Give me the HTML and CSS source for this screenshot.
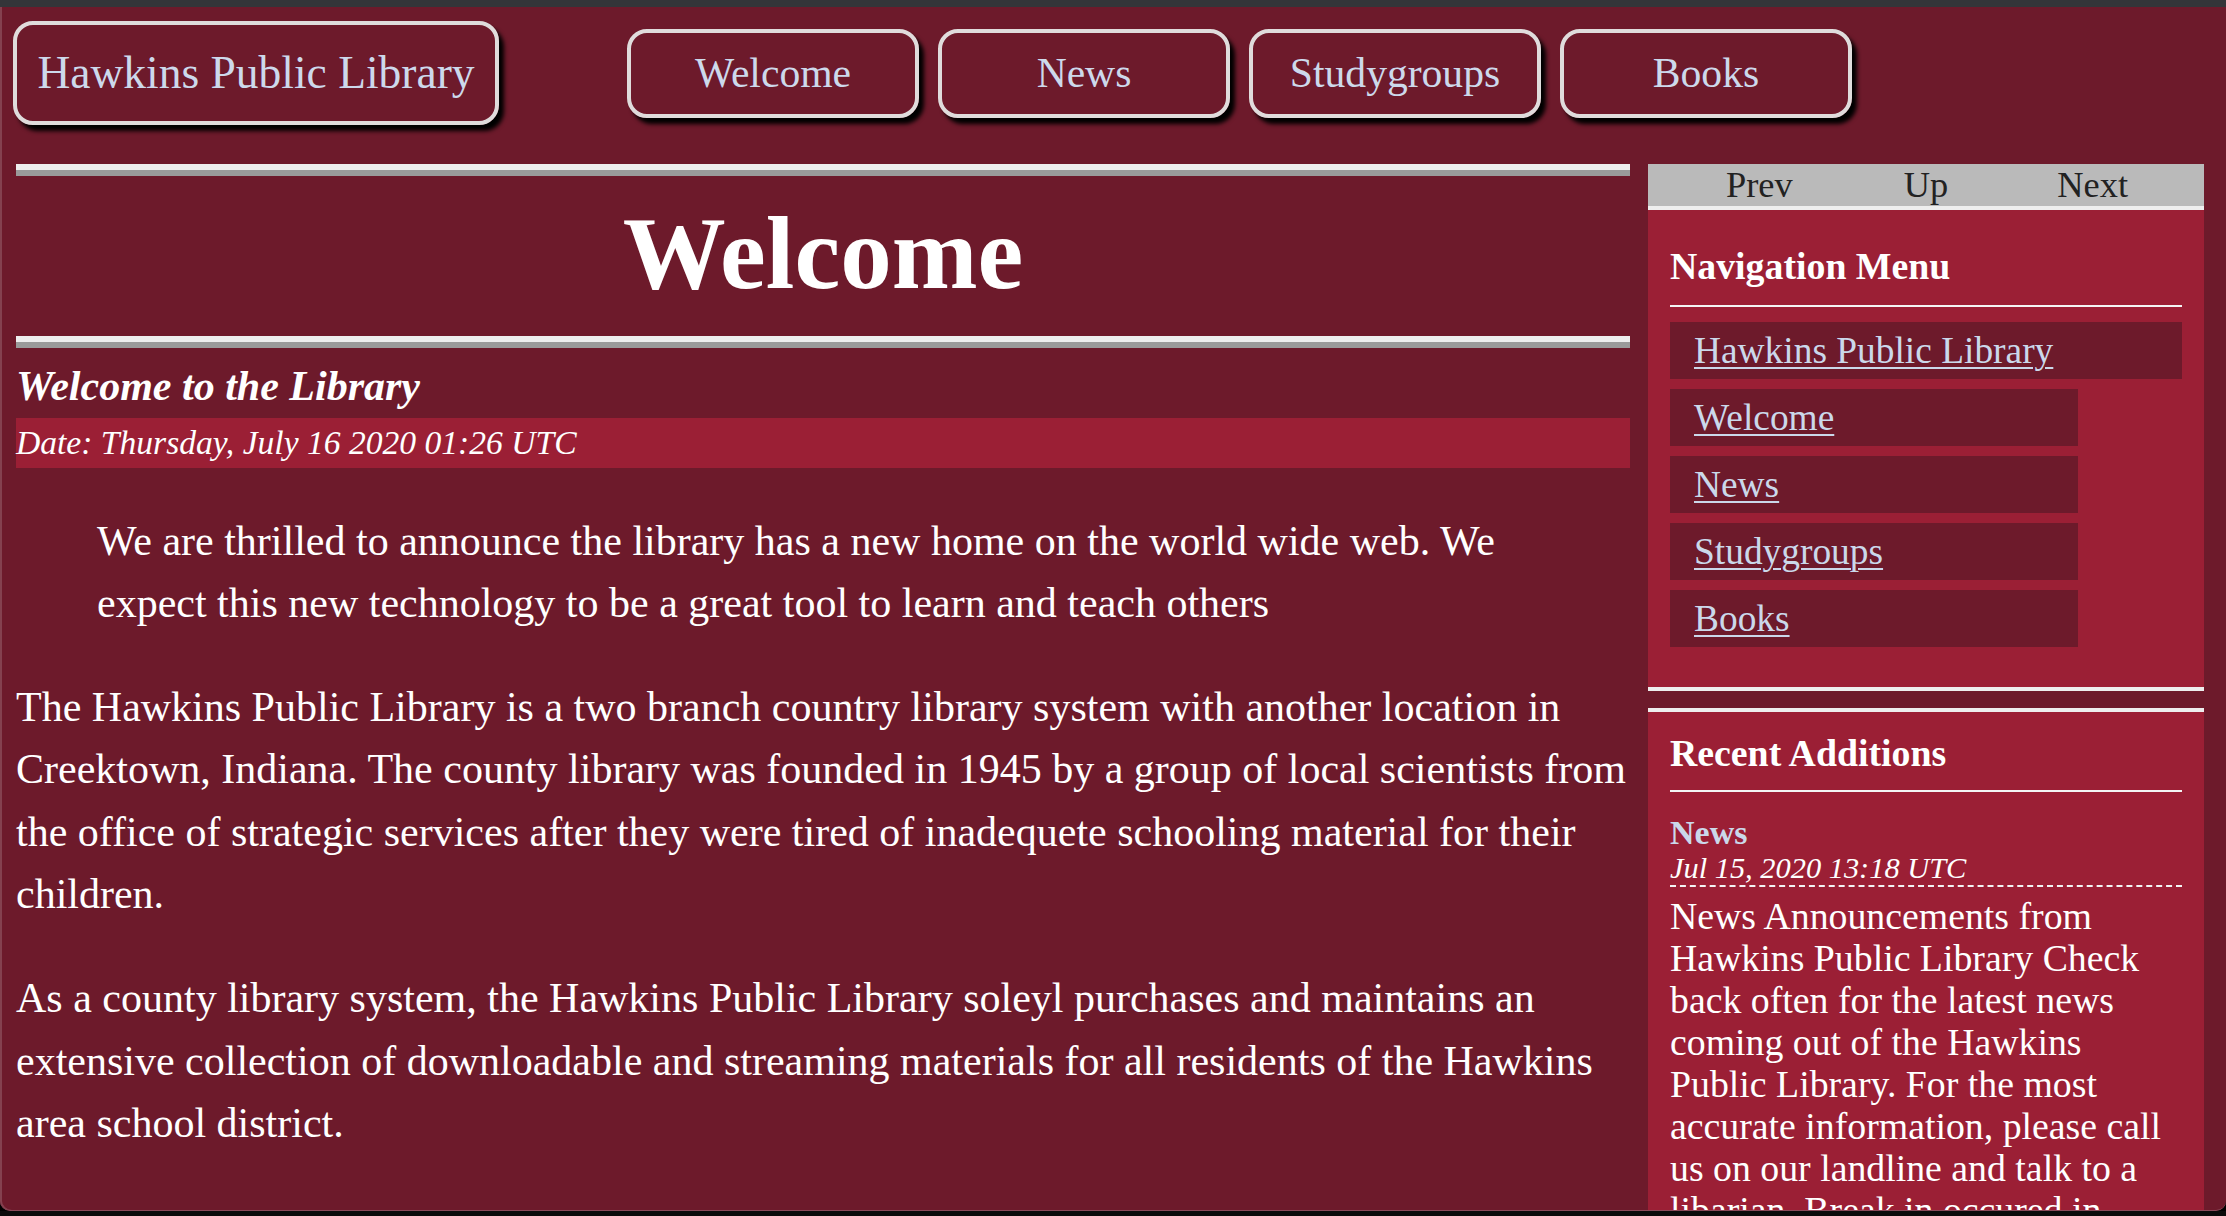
FILE: index.html
```html
<!DOCTYPE html>
<html lang="en">
<head>
<meta charset="utf-8">
<title>Hawkins Public Library - Welcome</title>
<link rel="stylesheet" href="styles.css">
</head>
<body>
<div class="titlebar"></div>
<div class="window">
  <header class="topnav">
    <a class="btn brand" href="#">Hawkins Public Library</a>
    <nav class="tabs">
      <a class="btn tab" href="#">Welcome</a>
      <a class="btn tab" href="#">News</a>
      <a class="btn tab" href="#">Studygroups</a>
      <a class="btn tab" href="#">Books</a>
    </nav>
  </header>
  <div class="layout">
    <main class="content">
      <hr class="rule">
      <h1 class="page-title">Welcome</h1>
      <hr class="rule">
      <article class="post">
        <h2 class="post-title">Welcome to the Library</h2>
        <div class="post-date">Date: Thursday, July 16 2020 01:26 UTC</div>
        <blockquote class="post-quote">We are thrilled to announce the library has a new home on the world wide web. We expect this new technology to be a great tool to learn and teach others</blockquote>
        <p class="post-text">The Hawkins Public Library is a two branch country library system with another location in Creektown, Indiana. The county library was founded in 1945 by a group of local scientists from the office of strategic services after they were tired of inadequete schooling material for their children.</p>
        <p class="post-text">As a county library system, the Hawkins Public Library soleyl purchases and maintains an extensive collection of downloadable and streaming materials for all residents of the Hawkins area school district.</p>
        <p class="post-text">Check back frequently for updates on our services, including the books and study groups we offer.</p>
      </article>
    </main>
    <aside class="sidebar">
      <div class="pager">
        <a class="pager-link" href="#">Prev</a>
        <a class="pager-link" href="#">Up</a>
        <a class="pager-link" href="#">Next</a>
      </div>
      <section class="panel nav-panel">
        <h3 class="panel-title">Navigation Menu</h3>
        <ul class="menu">
          <li class="menu-item menu-item-wide"><a class="menu-link" href="#">Hawkins Public Library</a></li>
          <li class="menu-item"><a class="menu-link" href="#">Welcome</a></li>
          <li class="menu-item"><a class="menu-link" href="#">News</a></li>
          <li class="menu-item"><a class="menu-link" href="#">Studygroups</a></li>
          <li class="menu-item"><a class="menu-link" href="#">Books</a></li>
        </ul>
      </section>
      <section class="panel recent-panel">
        <h3 class="panel-title recent-title">Recent Additions</h3>
        <div class="recent-item">
          <a class="recent-link" href="#">News</a>
          <div class="recent-date">Jul 15, 2020 13:18 UTC</div>
          <p class="recent-text">News Announcements from Hawkins Public Library Check back often for the latest news coming out of the Hawkins Public Library. For the most accurate information, please call us on our landline and talk to a libarian. Break in occured in Hawkins National Laboratory last night, please report anything you may have seen.</p>
        </div>
      </section>
    </aside>
  </div>
</div>
<div class="bottom-strip"></div>
</body>
</html>
```
FILE: styles.css
```css
html, body {
  margin: 0;
  padding: 0;
}
body {
  background: #000;
  font-family: "Liberation Serif", "Times New Roman", serif;
  color: #fff;
  width: 2226px;
  height: 1216px;
  overflow: hidden;
}
.titlebar {
  height: 7px;
  background: #343539;
}
.window {
  box-sizing: border-box;
  height: 1204px;
  background: #6d1a2b;
  border-radius: 0 0 10px 10px;
  border-bottom: 1px solid #8c4a5a;
  box-shadow: inset 2px 0 0 #84414f;
  overflow: hidden;
}
.bottom-strip {
  height: 5px;
  background: #0b0b0b;
}

/* header */
.topnav {
  display: flex;
  align-items: center;
  padding: 14px 0 0 13px;
}
.btn {
  box-sizing: border-box;
  display: block;
  border: 4px solid #e0dcdc;
  border-radius: 20px;
  box-shadow: 5px 6px 4px #000;
  color: #cdd9eb;
  text-decoration: none;
  text-align: center;
  white-space: nowrap;
}
.brand {
  width: 486px;
  height: 104px;
  font-size: 45.5px;
  line-height: 96px;
}
.tabs {
  display: flex;
  gap: 19px;
  margin-left: 128px;
}
.tab {
  width: 292px;
  height: 89px;
  font-size: 41.6px;
  line-height: 81px;
}

/* layout */
.layout {
  display: flex;
  align-items: flex-start;
  margin-top: 39px;
  padding-left: 16px;
}
.content {
  width: 1614px;
  flex: none;
}
.sidebar {
  width: 556px;
  flex: none;
  margin-left: 18px;
}

/* main column */
.rule {
  height: 0;
  margin: 0;
  border: 0;
  border-top: 6px solid #eeeeee;
  border-bottom: 6px solid #9a9a9a;
}
.page-title {
  margin: 20px 0 25px;
  font-size: 103px;
  line-height: 115px;
  font-weight: bold;
  text-align: center;
  color: #fff;
}
.post {
  font-size: 42px;
  line-height: 62.4px;
}
.post-title {
  margin: 14px 0 8px;
  font-size: 42px;
  line-height: 48px;
  font-style: italic;
  font-weight: bold;
}
.post-date {
  background: #9b1f35;
  font-size: 33.6px;
  line-height: 50px;
  font-style: italic;
}
.post-quote {
  margin: 41.6px 81px;
}
.post-text {
  margin: 41.6px 0;
}

/* sidebar */
.pager {
  display: grid;
  grid-template-columns: 1fr 1fr 1fr;
  padding: 0 28px;
  height: 42px;
  background: #bababa;
  border-bottom: 4px solid #eeeeee;
}
.pager-link {
  color: #222;
  text-decoration: none;
  text-align: center;
  font-size: 36.4px;
  line-height: 42px;
}
.panel {
  background: #9b1f35;
  padding: 0 22px;
}
.nav-panel {
  padding-top: 34px;
  padding-bottom: 40px;
  border-bottom: 4px solid #eeeeee;
}
.panel-title {
  margin: 0 0 15px;
  padding-bottom: 16px;
  border-bottom: 2px solid #f4f4f4;
  font-size: 37.8px;
  line-height: 45px;
  font-weight: bold;
  color: #fff;
}
.menu {
  list-style: none;
  margin: 0;
  padding: 0;
  display: flex;
  flex-direction: column;
  gap: 10px;
}
.menu-item {
  width: 408px;
  height: 57px;
  background: #6d1a2b;
}
.menu-item-wide {
  width: auto;
}
.menu-link {
  display: block;
  padding-left: 24px;
  font-size: 37.4px;
  line-height: 57px;
  color: #cbd8ea;
  text-decoration: underline;
  text-decoration-thickness: 2px;
  text-underline-offset: 4px;
  white-space: nowrap;
}
.recent-panel {
  margin-top: 17px;
  padding-top: 19px;
  border-top: 4px solid #eeeeee;
  min-height: 600px;
}
.recent-title {
  margin: 0;
  padding-bottom: 14px;
}
.recent-link {
  display: block;
  margin-top: 21px;
  font-size: 34px;
  line-height: 39px;
  font-weight: bold;
  color: #cbd8ea;
  text-decoration: none;
}
.recent-date {
  font-size: 30.4px;
  line-height: 33px;
  font-style: italic;
  border-bottom: 2px dashed #f4f4f4;
}
.recent-text {
  margin: 8px 0 0;
  font-size: 37.8px;
  line-height: 42px;
}
```
